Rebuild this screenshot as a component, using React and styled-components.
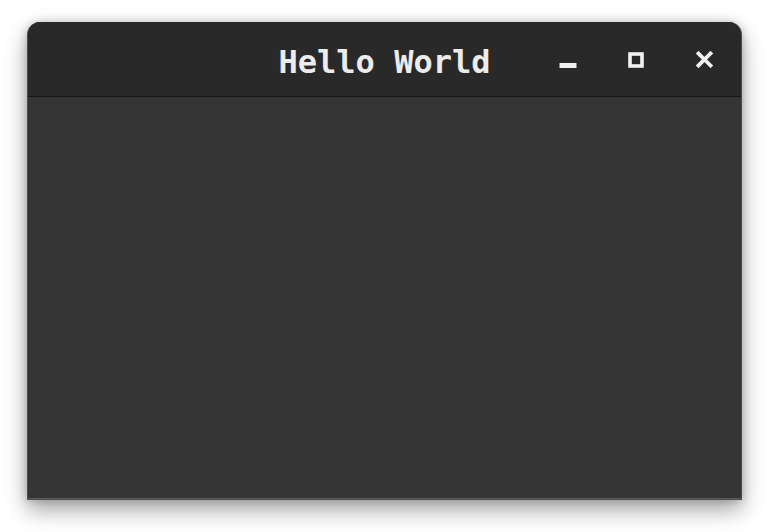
import React from "react";
import styled, { createGlobalStyle } from "styled-components";

const Global = createGlobalStyle`
  html, body { margin: 0; padding: 0; background: #ffffff; }
  body { width: 768px; height: 532px; overflow: hidden; }
`;

const Stage = styled.div`
  padding: 22px 26px 0 27px;
`;

const Window = styled.div`
  width: 715px;
  height: 478px;
  display: flex;
  flex-direction: column;
  border-radius: 13px 13px 0 0;
  background: #353535;
  box-shadow: 0 10px 22px rgba(0, 0, 0, 0.36), 0 0 8px rgba(0, 0, 0, 0.2);
  overflow: hidden;
  box-sizing: border-box;
  border: 1px solid #4e4e4e;
  border-top: none;
`;

const TitleBar = styled.div`
  height: 74px;
  flex: none;
  background: #292929;
  border-bottom: 1px solid #151515;
  display: grid;
  grid-template-columns: 1fr auto 1fr;
  align-items: center;
`;

const Title = styled.div`
  grid-column: 2;
  font-family: "DejaVu Sans Mono", "Liberation Mono", monospace;
  font-weight: bold;
  font-size: 32px;
  color: #ececec;
  letter-spacing: 0;
  line-height: 1;
  margin-top: 5px;
`;

const Controls = styled.div`
  grid-column: 3;
  justify-self: end;
  display: flex;
  padding-right: 3px;
  margin-top: 1px;
`;

const ControlButton = styled.div`
  width: 68px;
  height: 40px;
  display: flex;
  align-items: center;
  justify-content: center;
  color: #f0f0f0;
`;

const Body = styled.div`
  flex: 1;
  background: #353535;
  border-bottom: 1px solid #5a5a5a;
`;

const MinIcon = () => (
  <svg width="18" height="16" viewBox="0 0 18 16">
    <rect x="0.5" y="11" width="17" height="5" fill="currentColor" />
  </svg>
);

const MaxIcon = () => (
  <svg width="16" height="16" viewBox="0 0 16 16">
    <rect x="2" y="2" width="12" height="12" fill="none" stroke="currentColor" strokeWidth="3.6" />
  </svg>
);

const CloseIcon = () => (
  <svg width="17" height="17" viewBox="0 0 17 17">
    <path d="M2.5 2.5 L14.5 14.5 M14.5 2.5 L2.5 14.5" stroke="currentColor" strokeWidth="3.8" strokeLinecap="square" />
  </svg>
);

export default function App() {
  return (
    <>
      <Global />
      <Stage>
        <Window>
          <TitleBar>
            <Title>Hello World</Title>
            <Controls>
              <ControlButton><MinIcon /></ControlButton>
              <ControlButton><MaxIcon /></ControlButton>
              <ControlButton><CloseIcon /></ControlButton>
            </Controls>
          </TitleBar>
          <Body />
        </Window>
      </Stage>
    </>
  );
}
